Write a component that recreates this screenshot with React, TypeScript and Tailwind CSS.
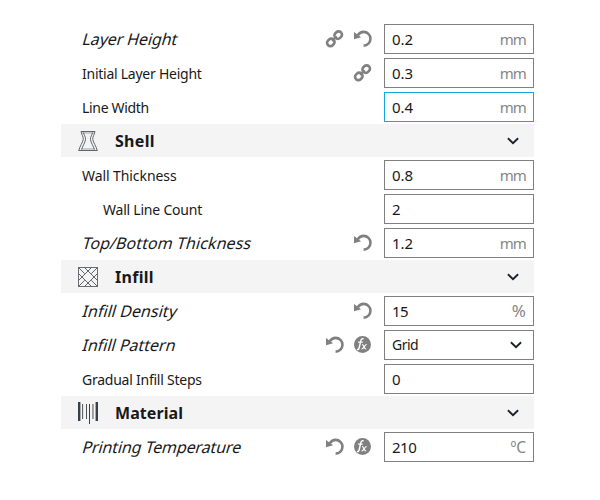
import type { ReactNode } from 'react';

const LinkIcon = () => (
  <svg width="18" height="18" viewBox="0.5 0.3 18 18" className="overflow-visible" fill="none" stroke="#808080" strokeWidth="2.6">
    <rect x="-3.9" y="-3.3" width="7.8" height="6.6" rx="3.2" transform="translate(12.7 5.4) rotate(-45)" />
    <rect x="-3.9" y="-3.3" width="7.8" height="6.6" rx="3.2" transform="translate(5.3 12.7) rotate(-45)" />
    <path d="M6.6 11.3 11.4 6.6" strokeWidth="1.8" />
  </svg>
);

const ResetIcon = () => (
  <svg width="18" height="18" viewBox="0.2 0.3 18 18" className="overflow-visible">
    <path d="M4 5.6C5.7 3 7.7 2.2 9.8 2.2a6.7 6.7 0 0 1 0 13.7" fill="none" stroke="#808080" strokeWidth="2.6" />
    <path d="M.2 2.2v7.3L7.3 7.6Z" fill="#808080" />
  </svg>
);

const FormulaIcon = () => (
  <svg width="18" height="18" viewBox="0.5 0.5 18 18" className="overflow-visible">
    <circle cx="9" cy="9" r="8.5" fill="#808080" />
    <path d="M10.2 3.4C8.4 2.8 7.7 3.6 7.3 5.3L5.6 12.5C5.3 13.8 4.8 14.3 3.5 14M4.6 6.6H9.2" fill="none" stroke="#fff" strokeWidth="1.4" />
    <path d="M8.6 9C10.4 8.6 10.3 14 12.7 13.5M13.2 9C11.3 8.8 10.2 13.8 8 13.5" fill="none" stroke="#fff" strokeWidth="1.1" />
  </svg>
);

const Chevron = () => (
  <svg width="12" height="8" viewBox="0 0 12 8" fill="none" stroke="#1d2226" strokeWidth="1.9">
    <path d="M.9 1.3 6 6.1 11.1 1.3" />
  </svg>
);

const ShellIcon = () => (
  <svg width="20" height="20" viewBox="0 0 20 20" fill="none" stroke="#51565a" strokeWidth=".9">
    <path d="M3 .5H17M3 .5C3.5 4 5.6 5.5 5.2 8.5C4.8 11.5 1.8 15 .8 19.5M17 .5C16.5 4 14.4 5.5 14.8 8.5C15.2 11.5 18.2 15 19.2 19.5M.5 19.5H19.5" />
    <path d="M5.4 1.5C5.9 4 7.8 5.8 7.5 8.5C7.1 12 4.3 15.5 3.7 18.5M14.6 1.5C14.1 4 12.2 5.8 12.5 8.5C12.9 12 15.7 15.5 16.3 18.5" />
    <path d="M4 2H16M3 18H17" strokeWidth=".5" />
  </svg>
);

const InfillIcon = () => (
  <svg width="20" height="20" viewBox="0 0 20 20" fill="none" stroke="#51565a" strokeWidth=".9">
    <rect x=".5" y=".5" width="19" height="19" stroke="#6b6f73" strokeWidth="1" />
    <path d="M.5 13.5 13.5.5M6.5 19.5 19.5 6.5M6.5.5 19.5 13.5M.5 6.5 13.5 19.5" />
    <path d="M.5.5 6.7 6.7M19.5.5 13.3 6.7M.5 19.5 6.7 13.3M19.5 19.5 13.3 13.3" />
  </svg>
);

const MaterialIcon = () => (
  <svg width="20" height="24" viewBox="0 0 20 24" fill="#394047">
    <path d="M0 1h2.4v19H0zM17.6 1H20v19h-2.4zM4.2 3h.9v15h-.9zM8 3h.9v15H8zM11 3h1v20h-1zM14.5 3h.9v15h-.9z" />
  </svg>
);

function Row({ label, spacing, icons, value, unit, changed, nested, active, select }: {
  label: string; spacing: string; icons?: ReactNode; value: string; unit?: string;
  changed?: boolean; nested?: boolean; active?: boolean; select?: boolean;
}) {
  return (
    <div className="flex h-[34px] items-center">
      <div className={`flex-1 whitespace-nowrap ${nested ? 'pl-[42px]' : changed ? 'pl-[22px]' : 'pl-[21px]'}`}>
        <span className={`inline-block ${changed ? '-skew-x-[16deg] text-[16px]' : 'text-[14px]'} ${spacing}`}>{label}</span>
      </div>
      <div className="mr-[12px] flex gap-[10px]">{icons}</div>
      <div className={`flex h-[30px] w-[150px] items-center justify-between border pl-[7px] pr-[7px] ${active ? 'border-[#14a8dc]' : 'border-[#7f7f7f]'}`}>
        <span className={select ? 'text-[14px] tracking-[-0.5px]' : value.includes('.') ? 'text-[15px]' : 'text-[15px] tracking-[-0.5px]'}>{value}</span>
        {unit && <span className={`text-[#858585] ${unit === 'mm' ? 'text-[15px] tracking-[-0.9px]' : unit === '%' ? 'text-[17px]' : 'text-[15.5px]'}`}>{unit}</span>}
        {select && <span className="mr-[4px] pb-px"><Chevron /></span>}
      </div>
    </div>
  );
}

function Section({ title, icon, spacing }: { title: string; icon: ReactNode; spacing: string }) {
  return (
    <div className="mb-px flex h-[33px] items-center bg-[#f4f4f4] pl-[17px] pr-[15px]">
      <span className="flex w-[37px]">{icon}</span>
      <span className={`flex-1 text-[16px] font-bold ${spacing}`}>{title}</span>
      <Chevron />
    </div>
  );
}

export default function App() {
  return (
    <div className="h-[500px] w-[600px] bg-white pl-[61px] pt-[22px] font-['Noto_Sans',sans-serif] leading-[22px] text-[#191919]">
      <div className="w-[473px]">
        <Row label="Layer Height" spacing="tracking-[-0.1px]" changed icons={<><LinkIcon /><ResetIcon /></>} value="0.2" unit="mm" />
        <Row label="Initial Layer Height" spacing="tracking-[-0.25px]" icons={<LinkIcon />} value="0.3" unit="mm" />
        <Row label="Line Width" spacing="tracking-[-0.32px]" value="0.4" unit="mm" active />
        <Section title="Shell" spacing="tracking-[0.3px]" icon={<ShellIcon />} />
        <Row label="Wall Thickness" spacing="tracking-[-0.08px]" value="0.8" unit="mm" />
        <Row label="Wall Line Count" spacing="tracking-[-0.22px]" nested value="2" />
        <Row label="Top/Bottom Thickness" spacing="tracking-[0.08px]" changed icons={<ResetIcon />} value="1.2" unit="mm" />
        <Section title="Infill" spacing="tracking-[0.3px]" icon={<InfillIcon />} />
        <Row label="Infill Density" spacing="tracking-[0.05px]" changed icons={<ResetIcon />} value="15" unit="%" />
        <Row label="Infill Pattern" spacing="tracking-normal" changed icons={<><ResetIcon /><FormulaIcon /></>} value="Grid" select />
        <Row label="Gradual Infill Steps" spacing="tracking-[-0.24px]" value="0" />
        <Section title="Material" spacing="tracking-[0.08px]" icon={<MaterialIcon />} />
        <Row label="Printing Temperature" spacing="tracking-[-0.12px]" changed icons={<><ResetIcon /><FormulaIcon /></>} value="210" unit="ºC" />
      </div>
    </div>
  );
}
